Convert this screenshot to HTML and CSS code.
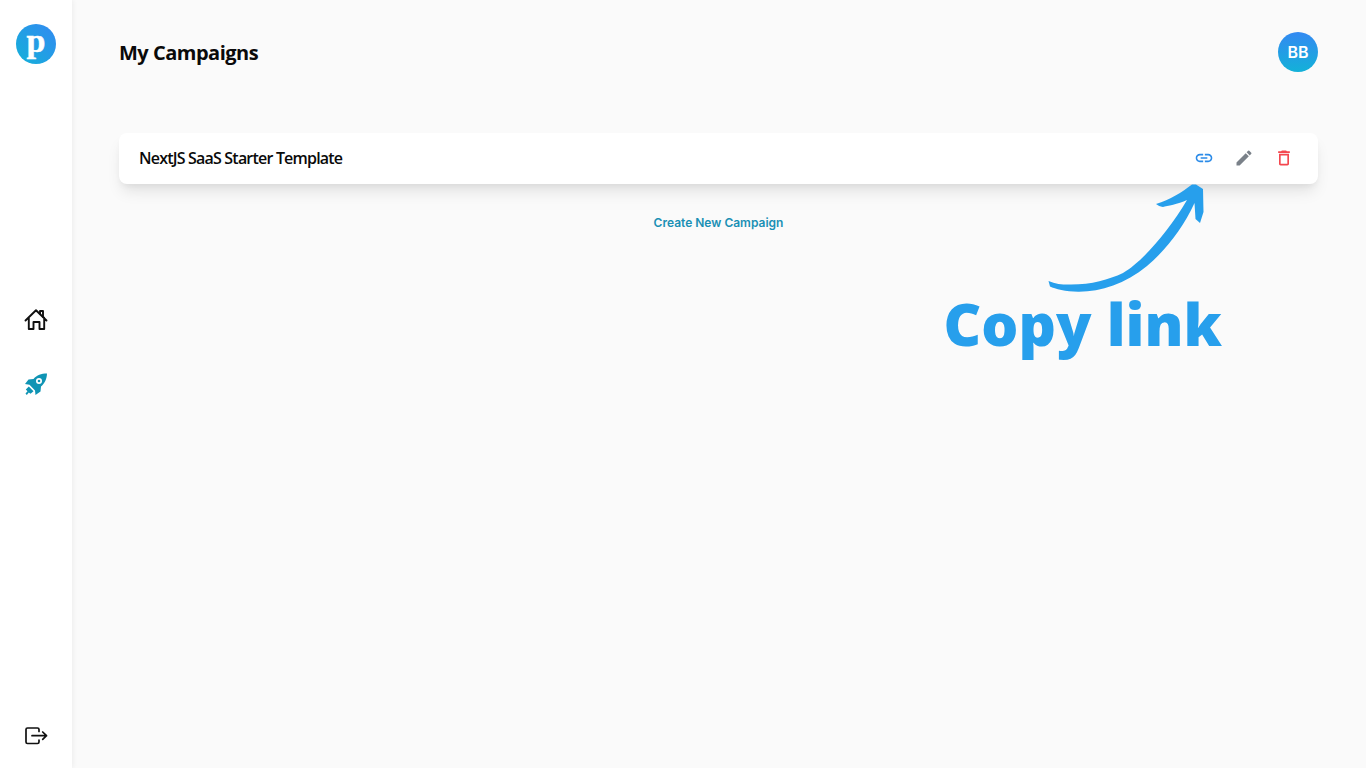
FILE: index.html
```html
<!DOCTYPE html>
<html lang="en">
<head>
<meta charset="utf-8">
<title>My Campaigns</title>
<link rel="stylesheet" href="styles.css">
</head>
<body>
<div class="app">
  <aside class="sidebar">
    <div class="logo"><span class="logo-p">p</span></div>
    <nav class="nav">
      <svg class="nav-icon" viewBox="0 0 24 24" fill="none" stroke="#111" stroke-width="1.9" stroke-linejoin="round" stroke-linecap="round"><path d="M1.500 12.500 12 2.200l10.500 10.300M4.800 9.800V21H9.500v-7h6v7h4.700V9.800"/><path d="M16 5.800V3h3v5.800"/></svg>
      <svg class="nav-icon" viewBox="0 0 24 24"><path fill="#0f94b4" fill-rule="evenodd" d="M23 1.500C17 1.500 13 3 9.500 7L4.500 7.500 1 12l4.500.8L11 18.500l.5 4.500 5-3.500.5-5C21 11 22.800 7 23 1.500ZM15 6a3 3 0 1 0 0 6 3 3 0 0 0 0-6Z"/><circle fill="#0f94b4" cx="15" cy="9" r="1.300"/><path fill="#0f94b4" d="M4.800 14.500 9.500 19.300 6.500 21.800 4.800 20.500 2.800 23 1.500 21.500 3.500 19.200 1.800 17.500Z"/></svg>
    </nav>
    <svg class="nav-icon logout" viewBox="0 0 24 24" fill="none" stroke="#111" stroke-width="1.700" stroke-linejoin="round" stroke-linecap="round"><path d="M15 7.500V5.500A1.500 1.500 0 0 0 13.500 4H3.500A1.500 1.500 0 0 0 2 5.500v12.500A1.500 1.500 0 0 0 3.500 19.500h10a1.500 1.500 0 0 0 1.500-1.500V16"/><path d="M8 11.700h14.500M18.700 8l3.800 3.700-3.800 3.700"/></svg>
  </aside>
  <main class="main">
    <header class="header">
      <h1 class="title">My Campaigns</h1>
      <div class="avatar">BB</div>
    </header>
    <section class="card">
      <h2 class="card-title">NextJS SaaS Starter Template</h2>
      <div class="actions">
        <svg class="action" viewBox="0 0 24 24"><path fill="#2b8be8" d="M3.900 12c0-1.710 1.390-3.100 3.100-3.100h4V7H7c-2.760 0-5 2.240-5 5s2.240 5 5 5h4v-1.900H7c-1.710 0-3.100-1.390-3.100-3.100zM8 13h8v-2H8v2zm9-6h-4v1.900h4c1.710 0 3.100 1.390 3.100 3.100s-1.390 3.100-3.100 3.100h-4V17h4c2.760 0 5-2.240 5-5s-2.240-5-5-5z"/></svg>
        <svg class="action" viewBox="0 0 24 24"><path fill="#7a8189" d="M3 17.250V21h3.750L17.810 9.940l-3.750-3.750L3 17.250zM20.710 7.040a1 1 0 0 0 0-1.410l-2.340-2.340a1 1 0 0 0-1.410 0l-1.830 1.830 3.750 3.750 1.830-1.830z"/></svg>
        <svg class="action" viewBox="0 0 24 24"><path fill="#f4474f" d="M16 9v10H8V9h8m-1.500-6h-5l-1 1H5v2h14V4h-3.500l-1-1zM18 7H6v12c0 1.100.9 2 2 2h8c1.100 0 2-.9 2-2V7z"/></svg>
      </div>
    </section>
    <a class="create" href="#">Create New Campaign</a>
  </main>
</div>
<svg class="arrow" viewBox="1040 180 170 115" width="170" height="115"><path fill="#279fec" d="M1048.500 281C1055 284 1062 284.500 1068 284.500C1090 285 1108 280 1123 273C1142 262 1168 232 1187 200C1178 204 1167 206 1163 207C1160 206.500 1158 205.500 1156 204C1170 200 1182 192 1192 184.500L1196 184.500L1203 189L1203.500 212L1200 223L1195.500 219L1194.500 203C1183 228 1166 250 1147 266C1125 284 1100 292 1078 291.700C1066 291.500 1055 289 1050 286.500Z"/></svg>
<div class="callout">Copy link</div>
</body>
</html>
```
FILE: styles.css
```css
* { box-sizing: border-box; }
html, body { margin: 0; height: 100%; }
body { background: #fafafa; font-family: "Open Sans", sans-serif; overflow: hidden; }
.app { display: flex; height: 768px; }
.sidebar {
  width: 72px; flex: none; background: #fff; display: flex; flex-direction: column;
  align-items: center; padding: 24px 0 20px; box-shadow: 1px 0 5px rgba(0,0,0,.06);
}
.logo {
  width: 40px; height: 40px; border-radius: 50%;
  background: linear-gradient(45deg, #13b1d8, #3389f2);
  display: flex; align-items: center; justify-content: center;
}
.logo-p {
  font-family: "Liberation Serif", serif; font-weight: 700; font-size: 34px; line-height: 40px;
  color: #fff; margin-top: -7px; -webkit-text-stroke: .5px #fff;
}
.nav { display: flex; flex-direction: column; gap: 40px; margin-top: 244px; }
.nav-icon { width: 24px; height: 24px; display: block; }
.logout { margin-top: auto; }
.main { flex: 1; padding: 32px 48px 0 47px; display: flex; flex-direction: column; }
.header { display: flex; justify-content: space-between; align-items: flex-start; height: 40px; }
.title { margin: 5px 0 0; font-size: 20px; line-height: 32px; font-weight: 700; color: #0a0a0a; letter-spacing: -.5px; }
.avatar {
  width: 40px; height: 40px; border-radius: 50%; color: #fff;
  background: linear-gradient(180deg, #3389f2, #13b1d8);
  display: flex; align-items: center; justify-content: center;
  font-family: Inter, sans-serif; font-size: 16px; font-weight: 600;
}
.card {
  margin-top: 61px; height: 51px; background: #fff; border-radius: 8px;
  box-shadow: 0 10px 15px -3px rgba(0,0,0,.1), 0 4px 6px -2px rgba(0,0,0,.05);
  display: flex; align-items: center; justify-content: space-between; padding: 0 24px 0 20px;
}
.card-title { margin: 0 0 1px; font-size: 16px; font-weight: 600; color: #0a0a0a; letter-spacing: -.8px; }
.actions { display: flex; gap: 20px; margin-top: -2px; }
.action { width: 20px; height: 20px; display: block; }
.create {
  margin-top: 31px; align-self: center; font-family: Inter, sans-serif; font-size: 12px;
  line-height: 16px; font-weight: 600; color: #1a90b5; text-decoration: none;
}
.arrow { position: absolute; left: 1040px; top: 180px; }
.callout {
  position: absolute; left: 943.5px; top: 284px; font-size: 58.3px; line-height: 80px;
  font-weight: 800; color: #279fec; white-space: nowrap;
}
```
